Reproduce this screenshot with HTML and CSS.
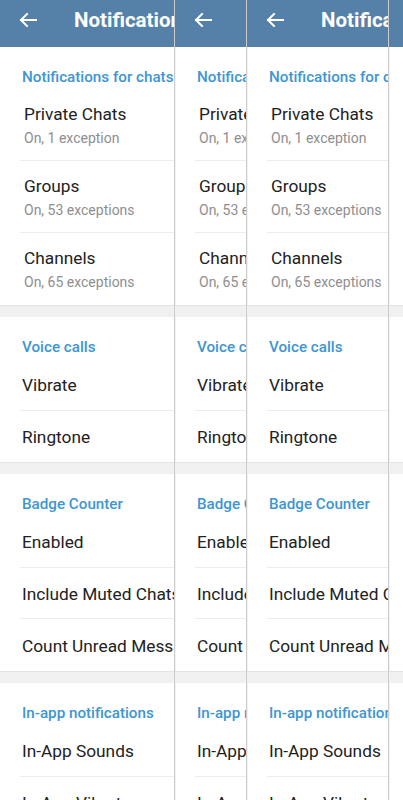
FILE: index.html
```html
<!DOCTYPE html>
<html>
<head>
<meta charset="utf-8">
<link rel="stylesheet" href="styles.css">
</head>
<body>
<div class="stage">
  <div class="pane pane-a">
    <div class="screen">
      <div class="bar"><svg class="back" viewBox="0 0 18 14" width="18" height="14"><path d="M17 7H2M8 1L2 7L8 13" fill="none" stroke="#fff" stroke-width="2" stroke-linecap="square"/></svg><span class="title">Notifications and Sounds</span></div>
      <div class="sec-head">Notifications for chats</div>
      <div class="list">
        <div class="row tall"><div class="t">Private Chats</div><div class="s">On, 1 exception</div></div>
        <div class="row tall"><div class="t">Groups</div><div class="s">On, 53 exceptions</div></div>
        <div class="row tall"><div class="t">Channels</div><div class="s">On, 65 exceptions</div></div>
      </div>
      <div class="band"></div>
      <div class="sec-head">Voice calls</div>
      <div class="list">
        <div class="row"><div class="t">Vibrate</div></div>
        <div class="row"><div class="t">Ringtone</div></div>
      </div>
      <div class="band"></div>
      <div class="sec-head">Badge Counter</div>
      <div class="list">
        <div class="row"><div class="t">Enabled</div></div>
        <div class="row"><div class="t">Include Muted Chats</div></div>
        <div class="row"><div class="t">Count Unread Messages</div></div>
      </div>
      <div class="band"></div>
      <div class="sec-head">In-app notifications</div>
      <div class="list">
        <div class="row"><div class="t">In‑App Sounds</div></div>
        <div class="row"><div class="t">In‑App Vibrate</div></div>
      </div>
    </div>
  </div>
  <div class="pane pane-b">
    <div class="screen">
      <div class="bar"><svg class="back" viewBox="0 0 18 14" width="18" height="14"><path d="M17 7H2M8 1L2 7L8 13" fill="none" stroke="#fff" stroke-width="2" stroke-linecap="square"/></svg><span class="title">Notifications and Sounds</span></div>
      <div class="sec-head">Notifications for chats</div>
      <div class="list">
        <div class="row tall"><div class="t">Private Chats</div><div class="s">On, 1 exception</div></div>
        <div class="row tall"><div class="t">Groups</div><div class="s">On, 53 exceptions</div></div>
        <div class="row tall"><div class="t">Channels</div><div class="s">On, 65 exceptions</div></div>
      </div>
      <div class="band"></div>
      <div class="sec-head">Voice calls</div>
      <div class="list">
        <div class="row"><div class="t">Vibrate</div></div>
        <div class="row"><div class="t">Ringtone</div></div>
      </div>
      <div class="band"></div>
      <div class="sec-head">Badge Counter</div>
      <div class="list">
        <div class="row"><div class="t">Enabled</div></div>
        <div class="row"><div class="t">Include Muted Chats</div></div>
        <div class="row"><div class="t">Count Unread Messages</div></div>
      </div>
      <div class="band"></div>
      <div class="sec-head">In-app notifications</div>
      <div class="list">
        <div class="row"><div class="t">In‑App Sounds</div></div>
        <div class="row"><div class="t">In‑App Vibrate</div></div>
      </div>
    </div>
  </div>
  <div class="pane pane-c">
    <div class="screen">
      <div class="bar"><svg class="back" viewBox="0 0 18 14" width="18" height="14"><path d="M17 7H2M8 1L2 7L8 13" fill="none" stroke="#fff" stroke-width="2" stroke-linecap="square"/></svg><span class="title">Notifications and Sounds</span></div>
      <div class="sec-head">Notifications for chats</div>
      <div class="list">
        <div class="row tall"><div class="t">Private Chats</div><div class="s">On, 1 exception</div></div>
        <div class="row tall"><div class="t">Groups</div><div class="s">On, 53 exceptions</div></div>
        <div class="row tall"><div class="t">Channels</div><div class="s">On, 65 exceptions</div></div>
      </div>
      <div class="band"></div>
      <div class="sec-head">Voice calls</div>
      <div class="list">
        <div class="row"><div class="t">Vibrate</div></div>
        <div class="row"><div class="t">Ringtone</div></div>
      </div>
      <div class="band"></div>
      <div class="sec-head">Badge Counter</div>
      <div class="list">
        <div class="row"><div class="t">Enabled</div></div>
        <div class="row"><div class="t">Include Muted Chats</div></div>
        <div class="row"><div class="t">Count Unread Messages</div></div>
      </div>
      <div class="band"></div>
      <div class="sec-head">In-app notifications</div>
      <div class="list">
        <div class="row"><div class="t">In‑App Sounds</div></div>
        <div class="row"><div class="t">In‑App Vibrate</div></div>
      </div>
    </div>
  </div>
  <div class="pane pane-d">
    <div class="screen">
      <div class="bar"></div>
      <div class="sec-head"></div>
      <div class="list">
        <div class="row tall"></div>
        <div class="row tall"></div>
        <div class="row tall"></div>
      </div>
      <div class="band"></div>
      <div class="sec-head"></div>
      <div class="list">
        <div class="row"></div>
        <div class="row"></div>
      </div>
      <div class="band"></div>
      <div class="sec-head"></div>
      <div class="list">
        <div class="row"></div>
        <div class="row"></div>
        <div class="row"></div>
      </div>
      <div class="band"></div>
      <div class="sec-head"></div>
      <div class="list">
        <div class="row"></div>
        <div class="row"></div>
      </div>
    </div>
  </div>
</div>
</body>
</html>
```

FILE: styles.css
```css
* { box-sizing: border-box; }
html, body { margin: 0; padding: 0; background: #fff; }
body { font-family: Roboto, "Noto Sans", sans-serif; }

.stage {
  display: flex;
  width: 403px;
  height: 800px;
  overflow: hidden;
}
.pane {
  flex: none;
  height: 800px;
  overflow: hidden;
  background: #fff;
}
.pane-a { width: 174px; }
.pane-b { width: 72px; }
.pane-c { width: 142px; }
.pane-d { width: 15px; }
.pane-b, .pane-c, .pane-d {
  border-left: 1px solid rgba(0, 0, 0, 0.2);
  box-shadow: inset 1px 0 0 rgba(0, 0, 0, 0.05);
}

.screen { width: 403px; }

.bar {
  height: 47px;
  background: #5581a9;
  display: flex;
  align-items: center;
  padding: 0 0 7px 19px;
}
.back { flex: none; display: block; }
.title {
  margin-left: 37px;
  color: #fff;
  font-size: 20.5px;
  font-weight: 700;
  white-space: nowrap;
  line-height: 24px;
}

.sec-head {
  height: 42px;
  padding: 21px 0 0 22px;
  color: #3d96d2;
  font-size: 15.2px;
  font-weight: 500;
  line-height: 18px;
  white-space: nowrap;
}

.row {
  margin-left: 20px;
  padding: 1.5px 0 0 2px;
  height: 51.6px;
  display: flex;
  flex-direction: column;
  justify-content: center;
  border-bottom: 1px solid #ececec;
  white-space: nowrap;
}
.row:last-child { border-bottom: none; }
.row.tall {
  height: 72px;
  justify-content: flex-start;
  padding: 14.5px 0 0 4px;
}
.t {
  color: #222;
  font-size: 17.3px;
  line-height: 20px;
}
.s {
  margin-top: 5px;
  color: #8e8e8e;
  font-size: 14px;
  line-height: 18px;
}

.band {
  height: 12px;
  background: #f0f0f0;
  border-top: 1px solid #e3e3e3;
}
```
